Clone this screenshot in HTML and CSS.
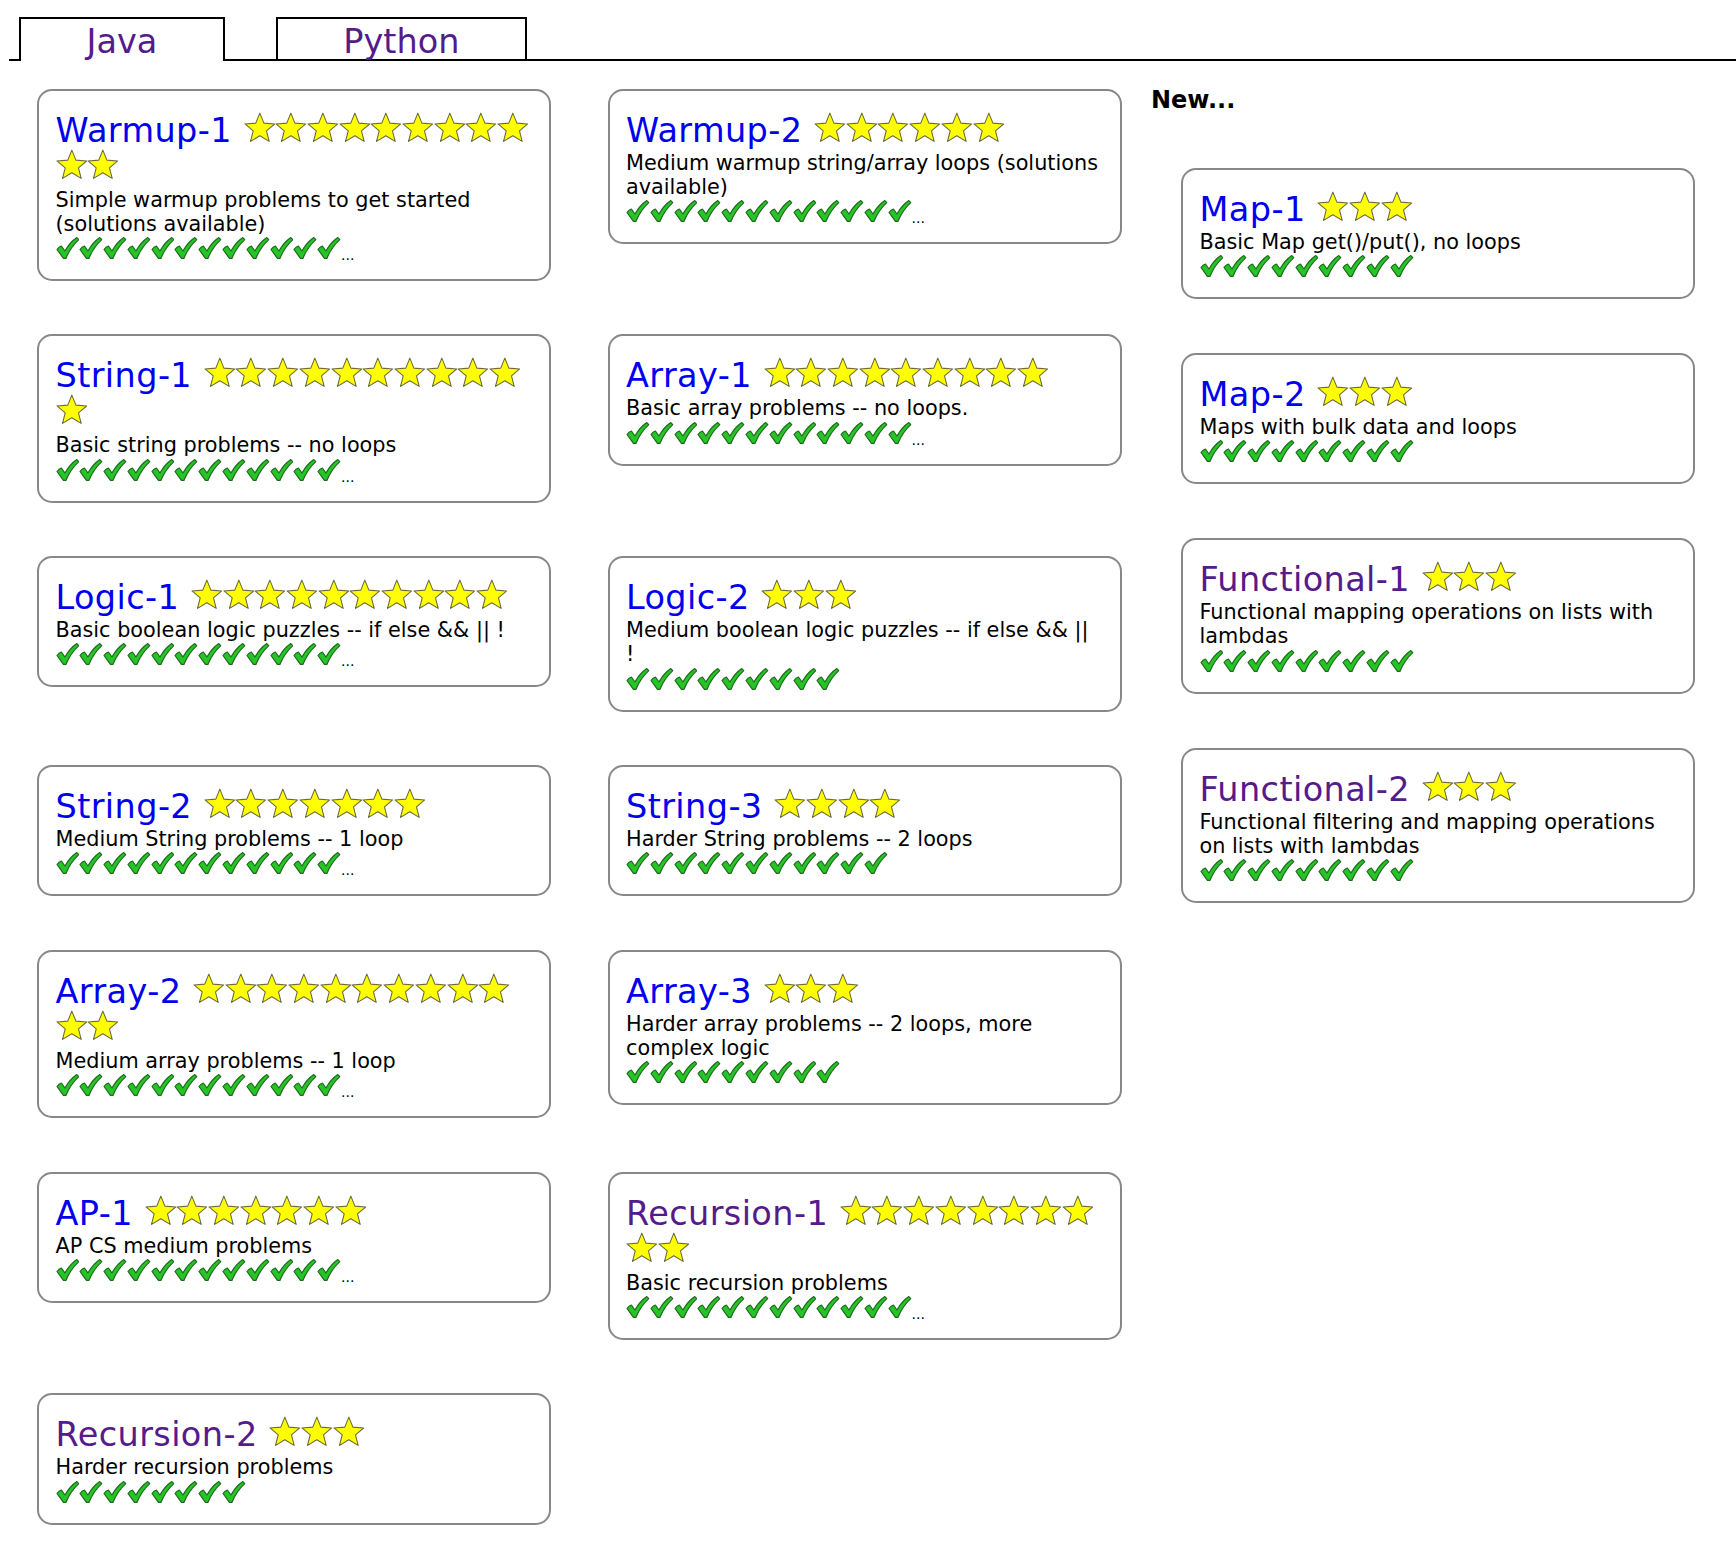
FILE: index.html
```html
<!DOCTYPE html>
<html>
<head>
<meta charset="utf-8">
<title>CodingBat Java</title>
<link rel="stylesheet" href="styles.css">
</head>
<body>
<svg class="defs" xmlns="http://www.w3.org/2000/svg">
  <symbol id="st" viewBox="0 0 32 30">
    <polygon points="16,1 20.1,11.1 31,11.9 22.7,18.9 25.4,29.5 16,23.8 6.6,29.5 9.3,18.9 1,11.9 11.9,11.1" fill="#ffff00" stroke="#6b6b3a" stroke-width="1.1" stroke-linejoin="round"/>
  </symbol>
  <symbol id="ck" viewBox="0 0 24 24">
    <path d="M1,13.5 C2.5,11.5 4,10.5 5.5,10 L9,15 C12.5,9 16.5,4.5 21,1.5 L23,3.5 C17,9 13,15 10,22.5 L7.5,22.5 Z" fill="#27c427" stroke="#1d6a1d" stroke-width="1.2" stroke-linejoin="round"/>
  </symbol>
</svg>

<div class="tabs">
  <a class="tab active">Java</a>
  <a class="tab">Python</a>
</div>

<div class="main">
  <div class="grid">
    <div class="card">
      <div class="title"><a class="name">Warmup-1</a> <span class="stars"><svg class="star"><use href="#st"/></svg><svg class="star"><use href="#st"/></svg><svg class="star"><use href="#st"/></svg><svg class="star"><use href="#st"/></svg><svg class="star"><use href="#st"/></svg><svg class="star"><use href="#st"/></svg><svg class="star"><use href="#st"/></svg><svg class="star"><use href="#st"/></svg><svg class="star"><use href="#st"/></svg><svg class="star"><use href="#st"/></svg><svg class="star"><use href="#st"/></svg></span></div>
      <div class="desc">Simple warmup problems to get started (solutions available)</div>
      <div class="checks"><svg class="ck"><use href="#ck"/></svg><svg class="ck"><use href="#ck"/></svg><svg class="ck"><use href="#ck"/></svg><svg class="ck"><use href="#ck"/></svg><svg class="ck"><use href="#ck"/></svg><svg class="ck"><use href="#ck"/></svg><svg class="ck"><use href="#ck"/></svg><svg class="ck"><use href="#ck"/></svg><svg class="ck"><use href="#ck"/></svg><svg class="ck"><use href="#ck"/></svg><svg class="ck"><use href="#ck"/></svg><svg class="ck"><use href="#ck"/></svg>...</div>
    </div>
    <div class="card">
      <div class="title"><a class="name">Warmup-2</a> <span class="stars"><svg class="star"><use href="#st"/></svg><svg class="star"><use href="#st"/></svg><svg class="star"><use href="#st"/></svg><svg class="star"><use href="#st"/></svg><svg class="star"><use href="#st"/></svg><svg class="star"><use href="#st"/></svg></span></div>
      <div class="desc">Medium warmup string/array loops (solutions available)</div>
      <div class="checks"><svg class="ck"><use href="#ck"/></svg><svg class="ck"><use href="#ck"/></svg><svg class="ck"><use href="#ck"/></svg><svg class="ck"><use href="#ck"/></svg><svg class="ck"><use href="#ck"/></svg><svg class="ck"><use href="#ck"/></svg><svg class="ck"><use href="#ck"/></svg><svg class="ck"><use href="#ck"/></svg><svg class="ck"><use href="#ck"/></svg><svg class="ck"><use href="#ck"/></svg><svg class="ck"><use href="#ck"/></svg><svg class="ck"><use href="#ck"/></svg>...</div>
    </div>

    <div class="card">
      <div class="title"><a class="name">String-1</a> <span class="stars"><svg class="star"><use href="#st"/></svg><svg class="star"><use href="#st"/></svg><svg class="star"><use href="#st"/></svg><svg class="star"><use href="#st"/></svg><svg class="star"><use href="#st"/></svg><svg class="star"><use href="#st"/></svg><svg class="star"><use href="#st"/></svg><svg class="star"><use href="#st"/></svg><svg class="star"><use href="#st"/></svg><svg class="star"><use href="#st"/></svg><svg class="star"><use href="#st"/></svg></span></div>
      <div class="desc">Basic string problems -- no loops</div>
      <div class="checks"><svg class="ck"><use href="#ck"/></svg><svg class="ck"><use href="#ck"/></svg><svg class="ck"><use href="#ck"/></svg><svg class="ck"><use href="#ck"/></svg><svg class="ck"><use href="#ck"/></svg><svg class="ck"><use href="#ck"/></svg><svg class="ck"><use href="#ck"/></svg><svg class="ck"><use href="#ck"/></svg><svg class="ck"><use href="#ck"/></svg><svg class="ck"><use href="#ck"/></svg><svg class="ck"><use href="#ck"/></svg><svg class="ck"><use href="#ck"/></svg>...</div>
    </div>
    <div class="card">
      <div class="title"><a class="name">Array-1</a> <span class="stars"><svg class="star"><use href="#st"/></svg><svg class="star"><use href="#st"/></svg><svg class="star"><use href="#st"/></svg><svg class="star"><use href="#st"/></svg><svg class="star"><use href="#st"/></svg><svg class="star"><use href="#st"/></svg><svg class="star"><use href="#st"/></svg><svg class="star"><use href="#st"/></svg><svg class="star"><use href="#st"/></svg></span></div>
      <div class="desc">Basic array problems -- no loops.</div>
      <div class="checks"><svg class="ck"><use href="#ck"/></svg><svg class="ck"><use href="#ck"/></svg><svg class="ck"><use href="#ck"/></svg><svg class="ck"><use href="#ck"/></svg><svg class="ck"><use href="#ck"/></svg><svg class="ck"><use href="#ck"/></svg><svg class="ck"><use href="#ck"/></svg><svg class="ck"><use href="#ck"/></svg><svg class="ck"><use href="#ck"/></svg><svg class="ck"><use href="#ck"/></svg><svg class="ck"><use href="#ck"/></svg><svg class="ck"><use href="#ck"/></svg>...</div>
    </div>

    <div class="card">
      <div class="title"><a class="name">Logic-1</a> <span class="stars"><svg class="star"><use href="#st"/></svg><svg class="star"><use href="#st"/></svg><svg class="star"><use href="#st"/></svg><svg class="star"><use href="#st"/></svg><svg class="star"><use href="#st"/></svg><svg class="star"><use href="#st"/></svg><svg class="star"><use href="#st"/></svg><svg class="star"><use href="#st"/></svg><svg class="star"><use href="#st"/></svg><svg class="star"><use href="#st"/></svg></span></div>
      <div class="desc">Basic boolean logic puzzles -- if else &amp;&amp; || !</div>
      <div class="checks"><svg class="ck"><use href="#ck"/></svg><svg class="ck"><use href="#ck"/></svg><svg class="ck"><use href="#ck"/></svg><svg class="ck"><use href="#ck"/></svg><svg class="ck"><use href="#ck"/></svg><svg class="ck"><use href="#ck"/></svg><svg class="ck"><use href="#ck"/></svg><svg class="ck"><use href="#ck"/></svg><svg class="ck"><use href="#ck"/></svg><svg class="ck"><use href="#ck"/></svg><svg class="ck"><use href="#ck"/></svg><svg class="ck"><use href="#ck"/></svg>...</div>
    </div>
    <div class="card">
      <div class="title"><a class="name">Logic-2</a> <span class="stars"><svg class="star"><use href="#st"/></svg><svg class="star"><use href="#st"/></svg><svg class="star"><use href="#st"/></svg></span></div>
      <div class="desc">Medium boolean logic puzzles -- if else &amp;&amp; || !</div>
      <div class="checks"><svg class="ck"><use href="#ck"/></svg><svg class="ck"><use href="#ck"/></svg><svg class="ck"><use href="#ck"/></svg><svg class="ck"><use href="#ck"/></svg><svg class="ck"><use href="#ck"/></svg><svg class="ck"><use href="#ck"/></svg><svg class="ck"><use href="#ck"/></svg><svg class="ck"><use href="#ck"/></svg><svg class="ck"><use href="#ck"/></svg></div>
    </div>

    <div class="card">
      <div class="title"><a class="name">String-2</a> <span class="stars"><svg class="star"><use href="#st"/></svg><svg class="star"><use href="#st"/></svg><svg class="star"><use href="#st"/></svg><svg class="star"><use href="#st"/></svg><svg class="star"><use href="#st"/></svg><svg class="star"><use href="#st"/></svg><svg class="star"><use href="#st"/></svg></span></div>
      <div class="desc">Medium String problems -- 1 loop</div>
      <div class="checks"><svg class="ck"><use href="#ck"/></svg><svg class="ck"><use href="#ck"/></svg><svg class="ck"><use href="#ck"/></svg><svg class="ck"><use href="#ck"/></svg><svg class="ck"><use href="#ck"/></svg><svg class="ck"><use href="#ck"/></svg><svg class="ck"><use href="#ck"/></svg><svg class="ck"><use href="#ck"/></svg><svg class="ck"><use href="#ck"/></svg><svg class="ck"><use href="#ck"/></svg><svg class="ck"><use href="#ck"/></svg><svg class="ck"><use href="#ck"/></svg>...</div>
    </div>
    <div class="card">
      <div class="title"><a class="name">String-3</a> <span class="stars"><svg class="star"><use href="#st"/></svg><svg class="star"><use href="#st"/></svg><svg class="star"><use href="#st"/></svg><svg class="star"><use href="#st"/></svg></span></div>
      <div class="desc">Harder String problems -- 2 loops</div>
      <div class="checks"><svg class="ck"><use href="#ck"/></svg><svg class="ck"><use href="#ck"/></svg><svg class="ck"><use href="#ck"/></svg><svg class="ck"><use href="#ck"/></svg><svg class="ck"><use href="#ck"/></svg><svg class="ck"><use href="#ck"/></svg><svg class="ck"><use href="#ck"/></svg><svg class="ck"><use href="#ck"/></svg><svg class="ck"><use href="#ck"/></svg><svg class="ck"><use href="#ck"/></svg><svg class="ck"><use href="#ck"/></svg></div>
    </div>

    <div class="card">
      <div class="title"><a class="name">Array-2</a> <span class="stars"><svg class="star"><use href="#st"/></svg><svg class="star"><use href="#st"/></svg><svg class="star"><use href="#st"/></svg><svg class="star"><use href="#st"/></svg><svg class="star"><use href="#st"/></svg><svg class="star"><use href="#st"/></svg><svg class="star"><use href="#st"/></svg><svg class="star"><use href="#st"/></svg><svg class="star"><use href="#st"/></svg><svg class="star"><use href="#st"/></svg><svg class="star"><use href="#st"/></svg><svg class="star"><use href="#st"/></svg></span></div>
      <div class="desc">Medium array problems -- 1 loop</div>
      <div class="checks"><svg class="ck"><use href="#ck"/></svg><svg class="ck"><use href="#ck"/></svg><svg class="ck"><use href="#ck"/></svg><svg class="ck"><use href="#ck"/></svg><svg class="ck"><use href="#ck"/></svg><svg class="ck"><use href="#ck"/></svg><svg class="ck"><use href="#ck"/></svg><svg class="ck"><use href="#ck"/></svg><svg class="ck"><use href="#ck"/></svg><svg class="ck"><use href="#ck"/></svg><svg class="ck"><use href="#ck"/></svg><svg class="ck"><use href="#ck"/></svg>...</div>
    </div>
    <div class="card">
      <div class="title"><a class="name">Array-3</a> <span class="stars"><svg class="star"><use href="#st"/></svg><svg class="star"><use href="#st"/></svg><svg class="star"><use href="#st"/></svg></span></div>
      <div class="desc">Harder array problems -- 2 loops, more complex logic</div>
      <div class="checks"><svg class="ck"><use href="#ck"/></svg><svg class="ck"><use href="#ck"/></svg><svg class="ck"><use href="#ck"/></svg><svg class="ck"><use href="#ck"/></svg><svg class="ck"><use href="#ck"/></svg><svg class="ck"><use href="#ck"/></svg><svg class="ck"><use href="#ck"/></svg><svg class="ck"><use href="#ck"/></svg><svg class="ck"><use href="#ck"/></svg></div>
    </div>

    <div class="card">
      <div class="title"><a class="name">AP-1</a> <span class="stars"><svg class="star"><use href="#st"/></svg><svg class="star"><use href="#st"/></svg><svg class="star"><use href="#st"/></svg><svg class="star"><use href="#st"/></svg><svg class="star"><use href="#st"/></svg><svg class="star"><use href="#st"/></svg><svg class="star"><use href="#st"/></svg></span></div>
      <div class="desc">AP CS medium problems</div>
      <div class="checks"><svg class="ck"><use href="#ck"/></svg><svg class="ck"><use href="#ck"/></svg><svg class="ck"><use href="#ck"/></svg><svg class="ck"><use href="#ck"/></svg><svg class="ck"><use href="#ck"/></svg><svg class="ck"><use href="#ck"/></svg><svg class="ck"><use href="#ck"/></svg><svg class="ck"><use href="#ck"/></svg><svg class="ck"><use href="#ck"/></svg><svg class="ck"><use href="#ck"/></svg><svg class="ck"><use href="#ck"/></svg><svg class="ck"><use href="#ck"/></svg>...</div>
    </div>
    <div class="card">
      <div class="title"><a class="name visited">Recursion-1</a> <span class="stars"><svg class="star"><use href="#st"/></svg><svg class="star"><use href="#st"/></svg><svg class="star"><use href="#st"/></svg><svg class="star"><use href="#st"/></svg><svg class="star"><use href="#st"/></svg><svg class="star"><use href="#st"/></svg><svg class="star"><use href="#st"/></svg><svg class="star"><use href="#st"/></svg><svg class="star"><use href="#st"/></svg><svg class="star"><use href="#st"/></svg></span></div>
      <div class="desc">Basic recursion problems</div>
      <div class="checks"><svg class="ck"><use href="#ck"/></svg><svg class="ck"><use href="#ck"/></svg><svg class="ck"><use href="#ck"/></svg><svg class="ck"><use href="#ck"/></svg><svg class="ck"><use href="#ck"/></svg><svg class="ck"><use href="#ck"/></svg><svg class="ck"><use href="#ck"/></svg><svg class="ck"><use href="#ck"/></svg><svg class="ck"><use href="#ck"/></svg><svg class="ck"><use href="#ck"/></svg><svg class="ck"><use href="#ck"/></svg><svg class="ck"><use href="#ck"/></svg>...</div>
    </div>

    <div class="card">
      <div class="title"><a class="name visited">Recursion-2</a> <span class="stars"><svg class="star"><use href="#st"/></svg><svg class="star"><use href="#st"/></svg><svg class="star"><use href="#st"/></svg></span></div>
      <div class="desc">Harder recursion problems</div>
      <div class="checks"><svg class="ck"><use href="#ck"/></svg><svg class="ck"><use href="#ck"/></svg><svg class="ck"><use href="#ck"/></svg><svg class="ck"><use href="#ck"/></svg><svg class="ck"><use href="#ck"/></svg><svg class="ck"><use href="#ck"/></svg><svg class="ck"><use href="#ck"/></svg><svg class="ck"><use href="#ck"/></svg></div>
    </div>
  </div>

  <div class="side">
    <div class="new">New...</div>
    <div class="stack">
      <div class="card">
        <div class="title"><a class="name">Map-1</a> <span class="stars"><svg class="star"><use href="#st"/></svg><svg class="star"><use href="#st"/></svg><svg class="star"><use href="#st"/></svg></span></div>
        <div class="desc">Basic Map get()/put(), no loops</div>
        <div class="checks"><svg class="ck"><use href="#ck"/></svg><svg class="ck"><use href="#ck"/></svg><svg class="ck"><use href="#ck"/></svg><svg class="ck"><use href="#ck"/></svg><svg class="ck"><use href="#ck"/></svg><svg class="ck"><use href="#ck"/></svg><svg class="ck"><use href="#ck"/></svg><svg class="ck"><use href="#ck"/></svg><svg class="ck"><use href="#ck"/></svg></div>
      </div>
      <div class="card">
        <div class="title"><a class="name">Map-2</a> <span class="stars"><svg class="star"><use href="#st"/></svg><svg class="star"><use href="#st"/></svg><svg class="star"><use href="#st"/></svg></span></div>
        <div class="desc">Maps with bulk data and loops</div>
        <div class="checks"><svg class="ck"><use href="#ck"/></svg><svg class="ck"><use href="#ck"/></svg><svg class="ck"><use href="#ck"/></svg><svg class="ck"><use href="#ck"/></svg><svg class="ck"><use href="#ck"/></svg><svg class="ck"><use href="#ck"/></svg><svg class="ck"><use href="#ck"/></svg><svg class="ck"><use href="#ck"/></svg><svg class="ck"><use href="#ck"/></svg></div>
      </div>
      <div class="card">
        <div class="title"><a class="name visited">Functional-1</a> <span class="stars"><svg class="star"><use href="#st"/></svg><svg class="star"><use href="#st"/></svg><svg class="star"><use href="#st"/></svg></span></div>
        <div class="desc">Functional mapping operations on lists with lambdas</div>
        <div class="checks"><svg class="ck"><use href="#ck"/></svg><svg class="ck"><use href="#ck"/></svg><svg class="ck"><use href="#ck"/></svg><svg class="ck"><use href="#ck"/></svg><svg class="ck"><use href="#ck"/></svg><svg class="ck"><use href="#ck"/></svg><svg class="ck"><use href="#ck"/></svg><svg class="ck"><use href="#ck"/></svg><svg class="ck"><use href="#ck"/></svg></div>
      </div>
      <div class="card">
        <div class="title"><a class="name visited">Functional-2</a> <span class="stars"><svg class="star"><use href="#st"/></svg><svg class="star"><use href="#st"/></svg><svg class="star"><use href="#st"/></svg></span></div>
        <div class="desc">Functional filtering and mapping operations on lists with lambdas</div>
        <div class="checks"><svg class="ck"><use href="#ck"/></svg><svg class="ck"><use href="#ck"/></svg><svg class="ck"><use href="#ck"/></svg><svg class="ck"><use href="#ck"/></svg><svg class="ck"><use href="#ck"/></svg><svg class="ck"><use href="#ck"/></svg><svg class="ck"><use href="#ck"/></svg><svg class="ck"><use href="#ck"/></svg><svg class="ck"><use href="#ck"/></svg></div>
      </div>
    </div>
  </div>
</div>
</body>
</html>
```
FILE: styles.css
```css
html, body {
  margin: 0;
  padding: 0;
  background: #ffffff;
}
body {
  font-family: "DejaVu Sans", Verdana, sans-serif;
  color: #000000;
}
.defs {
  position: absolute;
  width: 0;
  height: 0;
  overflow: hidden;
}
.tabs {
  display: flex;
  align-items: flex-end;
  gap: 51px;
  margin: 17px 0 0 9px;
  padding-left: 10px;
  border-bottom: 2px solid #000000;
}
.tab {
  display: block;
  border: 2px solid #000000;
  border-bottom: none;
  padding: 5px 65.5px 0;
  font-size: 33.5px;
  line-height: 35px;
  color: #551a8b;
  background: #ffffff;
}
.tab.active {
  margin-bottom: -2px;
  padding-bottom: 2px;
}
.main {
  display: flex;
  align-items: flex-start;
  margin-top: 25px;
  padding-left: 37px;
}
.grid {
  display: grid;
  grid-template-columns: 514px 514px;
  column-gap: 56.5px;
  row-gap: 53.4px;
  align-items: start;
  padding-top: 2.5px;
}
.side {
  margin-left: 29.5px;
}
.new {
  font-weight: bold;
  font-size: 24px;
  line-height: 28px;
  margin-bottom: 54px;
}
.stack {
  display: flex;
  flex-direction: column;
  gap: 53.8px;
  margin-left: 30px;
  width: 514px;
}
.card {
  border: 2px solid #888888;
  border-radius: 15px;
  padding: 21px 16.5px 16px;
}
.title {
  font-size: 33.5px;
  line-height: 36px;
  margin-bottom: 2px;
}
.name {
  color: #0000ee;
  letter-spacing: 0.4px;
}
.name.visited {
  color: #551a8b;
}
.stars {
  margin-left: 1px;
}
.star {
  width: 31.7px;
  height: 30px;
  vertical-align: baseline;
}
.desc {
  font-size: 20.8px;
  line-height: 24.3px;
}
.checks {
  font-size: 14px;
}
.ck {
  width: 23.8px;
  height: 24px;
  vertical-align: baseline;
}
```
